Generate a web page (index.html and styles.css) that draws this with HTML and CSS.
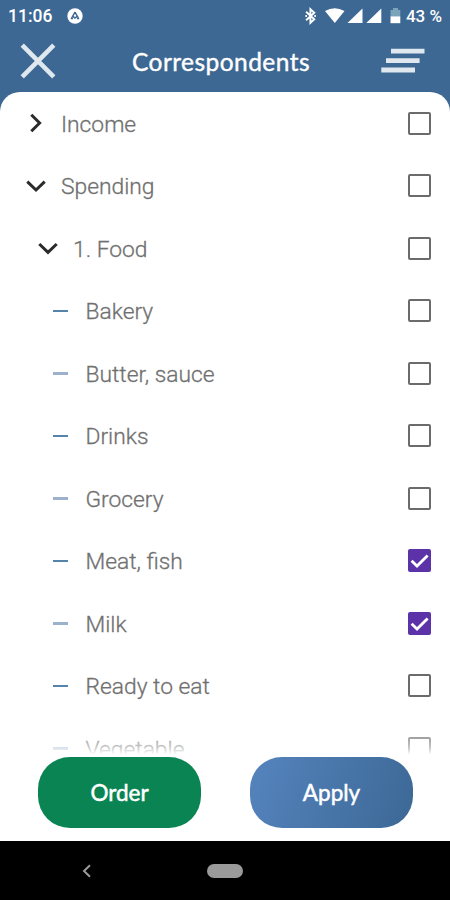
FILE: index.html
```html
<!DOCTYPE html>
<html lang="en">
<head>
    <meta charset="UTF-8">
    <meta name="viewport" content="width=device-width, initial-scale=1.0">
    <title>Correspondents</title>
    <link rel="stylesheet" href="styles.css">
</head>
<body>
    <div class="screen">
        <div class="status-bar">
            <span class="time">11:06</span>
            <svg class="app-icon" width="16" height="16" viewBox="0 0 16 16">
                <circle cx="8" cy="8" r="7.7" fill="#fff"/>
                <path d="M8 4.2 L4.6 10.2 M8 4.2 L11.4 10.2 M6 8.4 L8 10 L10 8.4 M3.8 10.6 H6 M10 10.6 H12.2" fill="none" stroke="#3d6893" stroke-width="1.4"/>
            </svg>
            <svg class="status-icons" width="98" height="18" viewBox="0 0 98 18">
                <path d="M3.1 4.8 L11.3 12.3 L7.4 15.8 V2.2 L11.3 5.7 L3.1 13.2" fill="none" stroke="#fff" stroke-width="1.9"/>
                <path d="M2.4 9 H4 M11.3 9 H12.9" stroke="#fff" stroke-width="1.8"/>
                <path d="M22 4 Q31.8 -1.4 41.5 4 L31.8 16 Z" fill="#fff"/>
                <path d="M44.5 16 L59.5 1.5 V16 Z" fill="#fff"/>
                <path d="M63.3 16 L78.3 1.5 V16 Z" fill="#fff"/>
                <path d="M87.5 9.3 V3 H90 V1 H95 V3 H97.3 V9.3 Z" fill="#7ba3ba"/>
                <path d="M87.5 9.3 H97.3 V16.2 H87.5 Z" fill="#fff"/>
            </svg>
            <span class="battery">43 %</span>
        </div>

        <div class="header">
            <svg width="36" height="36" viewBox="0 0 36 36">
                <path d="M2.2 2.2 L33.8 33.8 M33.8 2.2 L2.2 33.8" stroke="#dfe7ef" stroke-width="4.6"/>
            </svg>
            <h1>Correspondents</h1>
            <svg width="44" height="26" viewBox="0 0 44 26">
                <path d="M10 3.1 H43.5 M5 12.7 H38.6 M0.3 22 H34" stroke="#dfe7ef" stroke-width="4.8"/>
            </svg>
        </div>

        <div class="list">
            <div class="row">
                <svg class="arrow" width="24" height="24" viewBox="0 0 24 24"><path d="M7.3 3.7 L15.6 12 L7.3 20.3"/></svg>
                <span class="label">Income</span>
                <span class="checkbox"></span>
            </div>
            <div class="row">
                <svg class="arrow" width="24" height="24" viewBox="0 0 24 24"><path d="M3.3 7.6 L12 16 L20.7 7.6"/></svg>
                <span class="label">Spending</span>
                <span class="checkbox"></span>
            </div>
            <div class="row level-1">
                <svg class="arrow" width="24" height="24" viewBox="0 0 24 24"><path d="M3.3 8 L12 16.4 L20.7 8"/></svg>
                <span class="label">1. Food</span>
                <span class="checkbox"></span>
            </div>
            <div class="row level-2">
                <span class="dash"></span>
                <span class="label">Bakery</span>
                <span class="checkbox"></span>
            </div>
            <div class="row level-2">
                <span class="dash light"></span>
                <span class="label">Butter, sauce</span>
                <span class="checkbox"></span>
            </div>
            <div class="row level-2">
                <span class="dash"></span>
                <span class="label">Drinks</span>
                <span class="checkbox"></span>
            </div>
            <div class="row level-2">
                <span class="dash light"></span>
                <span class="label">Grocery</span>
                <span class="checkbox"></span>
            </div>
            <div class="row level-2">
                <span class="dash"></span>
                <span class="label">Meat, fish</span>
                <span class="checkbox checked">
                    <svg width="23" height="23" viewBox="0 0 23 23"><path d="M3.6 11.8 L9 17 L19.6 6.4"/></svg>
                </span>
            </div>
            <div class="row level-2">
                <span class="dash light"></span>
                <span class="label">Milk</span>
                <span class="checkbox checked">
                    <svg width="23" height="23" viewBox="0 0 23 23"><path d="M3.6 11.8 L9 17 L19.6 6.4"/></svg>
                </span>
            </div>
            <div class="row level-2">
                <span class="dash"></span>
                <span class="label">Ready to eat</span>
                <span class="checkbox"></span>
            </div>
            <div class="row level-2">
                <span class="dash light"></span>
                <span class="label">Vegetable</span>
                <span class="checkbox"></span>
            </div>
        </div>

        <div class="buttons">
            <button class="btn order">Order</button>
            <button class="btn apply">Apply</button>
        </div>

        <div class="nav-bar">
            <svg width="10" height="14" viewBox="0 0 10 14">
                <path d="M8 1.2 L2 7 L8 12.8" fill="none" stroke="#9a9a9a" stroke-width="2"/>
            </svg>
            <span class="home"></span>
        </div>
    </div>
</body>
</html>
```

FILE: styles.css
```css
* {
    margin: 0;
    padding: 0;
    box-sizing: border-box;
}

body {
    background-color: #3d6893;
    font-family: Roboto, sans-serif;
}

.screen {
    width: 450px;
    height: 900px;
    display: flex;
    flex-direction: column;
    overflow: hidden;
}

.status-bar {
    height: 32px;
    padding: 0 8px;
    display: flex;
    align-items: center;
    color: #fff;
    font-size: 17.5px;
    font-weight: 500;
}

.app-icon {
    margin-left: 15px;
}

.status-icons {
    margin-left: auto;
    margin-right: 5px;
}

.battery {
    font-size: 17px;
}

.header {
    height: 60px;
    padding: 0 25px 2px 20px;
    display: flex;
    align-items: center;
    justify-content: space-between;
}

.header h1 {
    padding-left: 5px;
    color: #fff;
    font-family: Lato, sans-serif;
    font-size: 24.5px;
    font-weight: 400;
    letter-spacing: 0.45px;
    -webkit-text-stroke: 0.4px #fff;
}

.list {
    height: 665px;
    overflow: hidden;
    position: relative;
    background-color: #fff;
    border-radius: 20px 20px 0 0;
}

/* Fades the last row out above the buttons */
.list::after {
    content: "";
    position: absolute;
    left: 0;
    right: 0;
    bottom: 0;
    height: 22px;
    background: linear-gradient(rgba(255, 255, 255, 0.3), rgba(255, 255, 255, 0.6) 55%, #fff 90%);
}

.row {
    height: 62.5px;
    padding: 0 19px 0 24px;
    display: flex;
    align-items: center;
}

.level-1 {
    padding-left: 36px;
}

.level-2 {
    padding-left: 53px;
}

.arrow {
    margin-right: 13px;
    fill: none;
    stroke: #2b2b2b;
    stroke-width: 3;
}

.dash {
    width: 15px;
    height: 2px;
    margin-right: 17.5px;
    background-color: #5583ac;
}

.dash.light {
    height: 3px;
    background-color: #9cb1cc;
}

.label {
    flex: 1;
    padding-top: 2px;
    color: #707070;
    font-size: 22.8px;
    font-weight: 300;
    -webkit-text-stroke: 0.3px #707070;
}

.checkbox {
    width: 23px;
    height: 23px;
    border: 2px solid #6b6b6b;
    border-radius: 2px;
}

.checkbox.checked {
    border: none;
    background-color: #5b32a8;
}

.checked svg {
    display: block;
    fill: none;
    stroke: #fff;
    stroke-width: 2.8;
}

.buttons {
    height: 84px;
    padding: 0 37px 0 38px;
    display: flex;
    justify-content: space-between;
    background-color: #fff;
}

.btn {
    width: 163px;
    height: 71px;
    border: none;
    border-radius: 32px;
    color: #fff;
    font-family: Lato, sans-serif;
    font-size: 22.5px;
    -webkit-text-stroke: 0.5px #fff;
}

.order {
    background-color: #0a8453;
}

.apply {
    background: linear-gradient(110deg, #5584be, #3c6895);
}

.nav-bar {
    height: 59px;
    padding-left: 82px;
    display: flex;
    align-items: center;
    background-color: #000;
}

.home {
    width: 36px;
    height: 14px;
    margin-left: 115px;
    border-radius: 7px;
    background-color: #9a9a9a;
}
```
